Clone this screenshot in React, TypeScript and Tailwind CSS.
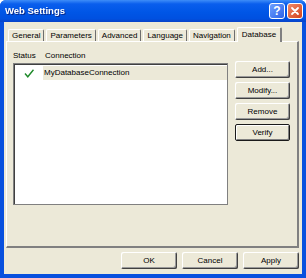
import React from 'react'

const tabs = ['General', 'Parameters', 'Advanced', 'Language', 'Navigation', 'Database']

function Btn({ label, isDefault = false, w = 'w-[55px]' }: { label: string; isDefault?: boolean; w?: string }) {
  return (
    <div
      className={`${w} h-[17px] flex items-center justify-center rounded-[2px] bg-[#ECE9D8] text-black ${
        isDefault
          ? 'border border-[#1a1a1a] shadow-[inset_1px_1px_#fff,inset_-1px_-1px_#808080]'
          : 'shadow-[inset_1px_1px_#fff,inset_-1px_-1px_#404040,inset_-2px_-2px_#9a9a9a]'
      }`}
    >
      {label}
    </div>
  )
}

export default function App() {
  return (
    <div
      className="w-[306px] h-[278px] flex flex-col bg-[#0850de] rounded-t-[6px] overflow-hidden text-[8px] leading-none"
      style={{ fontFamily: '"Liberation Sans", Arial, sans-serif' }}
    >
      {/* title bar */}
      <div className="h-[22px] flex items-center justify-between pl-[5px] pr-[3px] bg-[linear-gradient(to_bottom,#3e8df8_0%,#0a5eed_18%,#0056e6_55%,#0050e0_85%,#0843c8_100%)]">
        <span className="text-white font-bold text-[9.5px] drop-shadow-[1px_1px_0_#0a2a8a]">Web Settings</span>
        <div className="flex gap-[2px]">
          <div className="w-[16px] h-[16px] rounded-[3px] border border-white bg-[linear-gradient(to_bottom_right,#6fa0ff,#2a62e8)] flex items-center justify-center text-white font-bold text-[12px]">
            ?
          </div>
          <div className="w-[16px] h-[16px] rounded-[3px] border border-white bg-[linear-gradient(to_bottom_right,#f08a6a,#d3431c)] flex items-center justify-center">
            <svg width="10" height="10" viewBox="0 0 10 10">
              <path d="M2 2 L8 8 M8 2 L2 8" stroke="#fff" strokeWidth="1.8" strokeLinecap="round" />
            </svg>
          </div>
        </div>
      </div>

      {/* body */}
      <div className="flex-1 mx-[4px] mb-[4px] bg-[#ECE9D8] flex flex-col">
        {/* tabs */}
        <div className="flex items-end h-[19px] pt-[5px] pl-[4px] gap-[2px]">
          {tabs.map(t =>
            t === 'Database' ? (
              <div
                key={t}
                className="relative z-10 -mb-px h-[15px] px-[4px] flex items-center bg-[#ECE9D8] border-t border-l border-white border-r-2 border-r-[#808080] rounded-t-[2px]"
              >
                {t}
              </div>
            ) : (
              <div
                key={t}
                className="h-[12px] px-[3px] flex items-center border-t border-l border-white border-r border-r-[#6e6e6e] rounded-t-[2px]"
              >
                {t}
              </div>
            )
          )}
        </div>

        {/* panel */}
        <div className="ml-[2px] mr-[3px] h-[207px] border-t border-l border-white border-r-2 border-b-2 border-r-[#808080] border-b-[#808080] flex flex-col pl-[6px] pr-[7px]">
          <div className="flex h-[21px] items-end pb-[3px]">
            <span className="w-[32px]">Status</span>
            <span>Connection</span>
          </div>
          <div className="flex gap-[7px]">
            <div className="w-[215px] h-[142px] bg-white border border-[#808080] shadow-[inset_1px_1px_#404040]">
              <div className="flex items-center h-[14px] mt-[2px]">
                <div className="w-[29px] flex justify-center">
                  <svg width="10" height="9" viewBox="0 0 10 9">
                    <path d="M1 4.5 L3.8 7.8 L9.5 0.8" fill="none" stroke="#1f8a2a" strokeWidth="1.4" />
                  </svg>
                </div>
                <div className="flex-1 h-full bg-[#ECE9D8] flex items-center pl-[1px]">MyDatabaseConnection</div>
              </div>
            </div>
            <div className="flex flex-col mt-[-2px] gap-[4px]">
              <Btn label="Add..." />
              <Btn label="Modify..." />
              <Btn label="Remove" />
              <Btn label="Verify" isDefault />
            </div>
          </div>
        </div>

        {/* footer */}
        <div className="flex justify-end gap-[5px] pt-[4px] pr-[3px]">
          <Btn label="OK" w="w-[56px]" />
          <Btn label="Cancel" w="w-[56px]" />
          <Btn label="Apply" w="w-[56px]" />
        </div>
      </div>
    </div>
  )
}
